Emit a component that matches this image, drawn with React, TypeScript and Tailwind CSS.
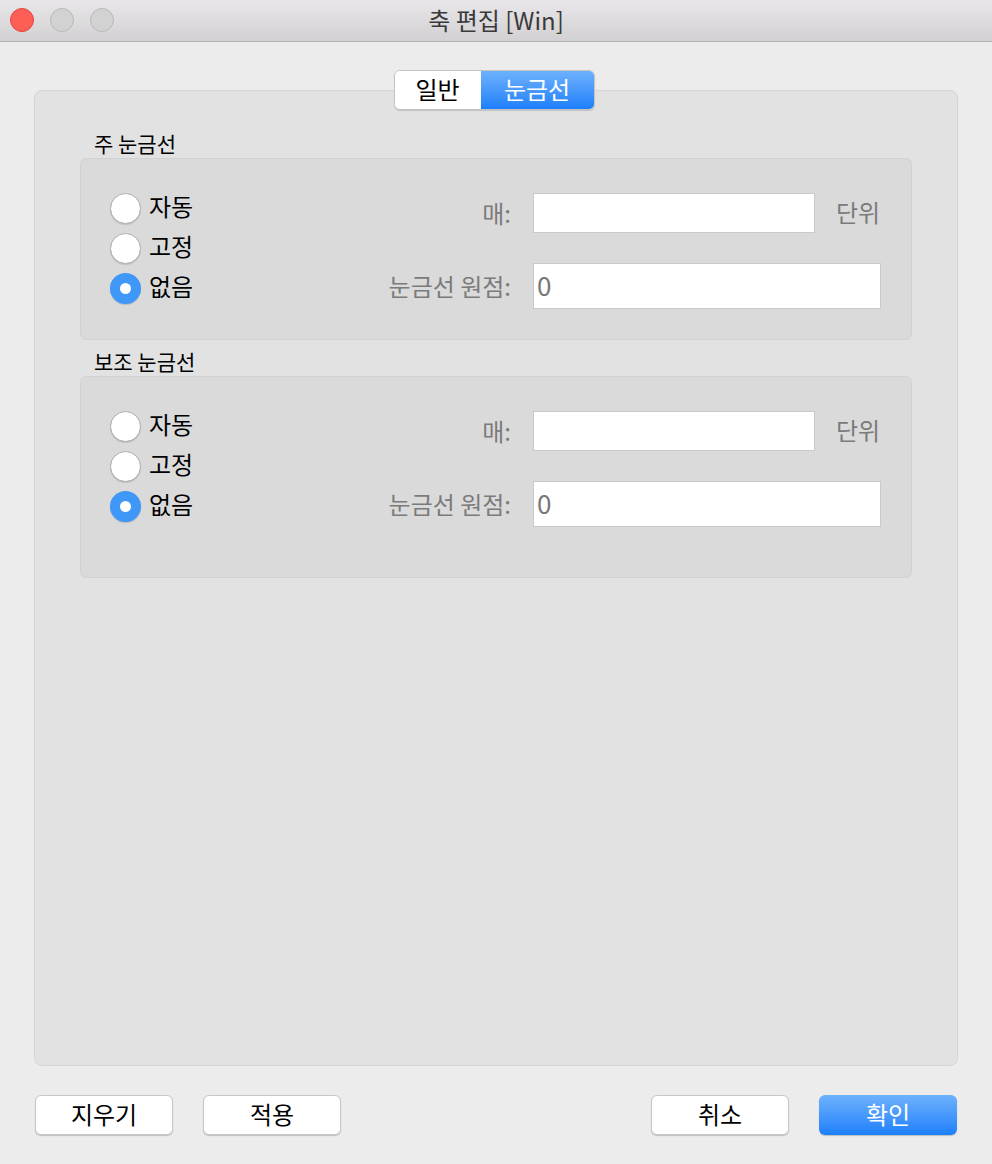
const font = { fontFamily: '"Noto Sans CJK KR", "Noto Sans", sans-serif' };

const Radio = ({ checked, label }: { checked?: boolean; label: string }) => (
  <div className="flex h-[40px] items-center">
    {checked ? (
      <span className="flex h-[31px] w-[31px] items-center justify-center rounded-full bg-[#3f97f8] shadow-[0_1px_1px_rgba(0,0,0,0.15)]">
        <span className="h-[11px] w-[11px] rounded-full bg-white" />
      </span>
    ) : (
      <span className="h-[31px] w-[31px] rounded-full border border-[#adadad] bg-white shadow-[0_1px_1px_rgba(0,0,0,0.12)]" />
    )}
    <span className="mb-[4px] ml-[8px] text-[24px] leading-none text-black">{label}</span>
  </div>
);

const Group = ({ title, tall }: { title: string; tall?: boolean }) => (
  <div>
    <div className="flex h-[28px] items-center pb-[2px] pl-[14px] text-[21px] leading-none text-black">{title}</div>
    <div
      className={`flex rounded-[6px] border border-[#d2d2d2] bg-[#dadada] ${tall ? 'h-[202px]' : 'h-[182px]'}`}
    >
      <div className="w-[279px] pl-[29px] pt-[29px]">
        <Radio label="자동" />
        <Radio label="고정" />
        <Radio checked label="없음" />
      </div>
      <div className="flex flex-col pt-[34px]">
        <div className="flex h-[40px] items-center">
          <span className="w-[151px] text-right text-[24px] leading-none text-[#7b7b7b]">매:</span>
          <div className="ml-[22px] h-[40px] w-[282px] border border-[#c9c9c9] bg-white" />
          <span className="mb-[2px] ml-[21px] text-[24px] leading-none text-[#7b7b7b]">단위</span>
        </div>
        <div className="mt-[30px] flex h-[46px] items-center">
          <span className="w-[151px] text-right text-[24px] leading-none text-[#7b7b7b]">눈금선 원점:</span>
          <div className="ml-[22px] flex h-[46px] w-[348px] items-center border border-[#c9c9c9] bg-white pb-[2px] pl-[3px] text-[26px] leading-none text-[#777]">
            0
          </div>
        </div>
      </div>
    </div>
  </div>
);

const Button = ({ label, primary }: { label: string; primary?: boolean }) => (
  <button
    className={`flex h-[40px] w-[138px] items-center justify-center rounded-[6px] pb-[3px] text-[24px] leading-none ${
      primary
        ? 'bg-gradient-to-b from-[#6db1fc] to-[#1a7ffb] text-white shadow-[0_1px_1px_rgba(0,0,0,0.2)]'
        : 'border border-[#c6c6c6] bg-white text-black shadow-[0_1px_1px_rgba(0,0,0,0.18)]'
    }`}
  >
    {label}
  </button>
);

export default function App() {
  return (
    <div style={font} className="flex h-[1164px] w-[992px] flex-col bg-[#ececec]">
      {/* title bar */}
      <div className="relative flex h-[42px] items-center justify-center border-b border-[#b3b3b3] bg-gradient-to-b from-[#e9e7e9] to-[#d2d0d2]">
        <div className="absolute left-[10px] top-[8px] flex gap-[16px]">
          <span className="h-[24px] w-[24px] rounded-full border border-[#e0463f] bg-[#fd5f57]" />
          <span className="h-[24px] w-[24px] rounded-full border border-[#b9b9b9] bg-[#d2d2d2]" />
          <span className="h-[24px] w-[24px] rounded-full border border-[#b9b9b9] bg-[#d2d2d2]" />
        </div>
        <span className="mb-[2px] text-[24px] leading-none text-[#3a3a3a]">축 편집 [Win]</span>
      </div>

      <div className="flex flex-1 flex-col pt-[28px]">
        {/* tabs */}
        <div className="relative z-10 flex justify-center">
          <div className="ml-[-4px] flex h-[40px] overflow-hidden rounded-[6px] border border-[#c4c4c4] shadow-[0_1px_1px_rgba(0,0,0,0.15)]">
            <div className="flex w-[86px] items-center justify-center bg-white pb-[3px] text-[24px] leading-none text-black">일반</div>
            <div className="flex w-[113px] items-center justify-center bg-gradient-to-b from-[#6db1fc] to-[#1a7ffb] pb-[3px] text-[24px] leading-none text-white">
              눈금선
            </div>
          </div>
        </div>

        {/* panel */}
        <div className="mx-[34px] mt-[-20px] h-[976px] rounded-[8px] border border-[#d6d6d6] bg-[#e2e2e2] px-[45px] pt-[39px]">
          <Group title="주 눈금선" />
          <div className="mt-[8px]">
            <Group title="보조 눈금선" tall />
          </div>
        </div>

        {/* buttons */}
        <div className="mt-[29px] flex px-[35px]">
          <Button label="지우기" />
          <div className="ml-[30px]">
            <Button label="적용" />
          </div>
          <div className="ml-auto">
            <Button label="취소" />
          </div>
          <div className="ml-[30px]">
            <Button label="확인" primary />
          </div>
        </div>
      </div>
    </div>
  );
}
